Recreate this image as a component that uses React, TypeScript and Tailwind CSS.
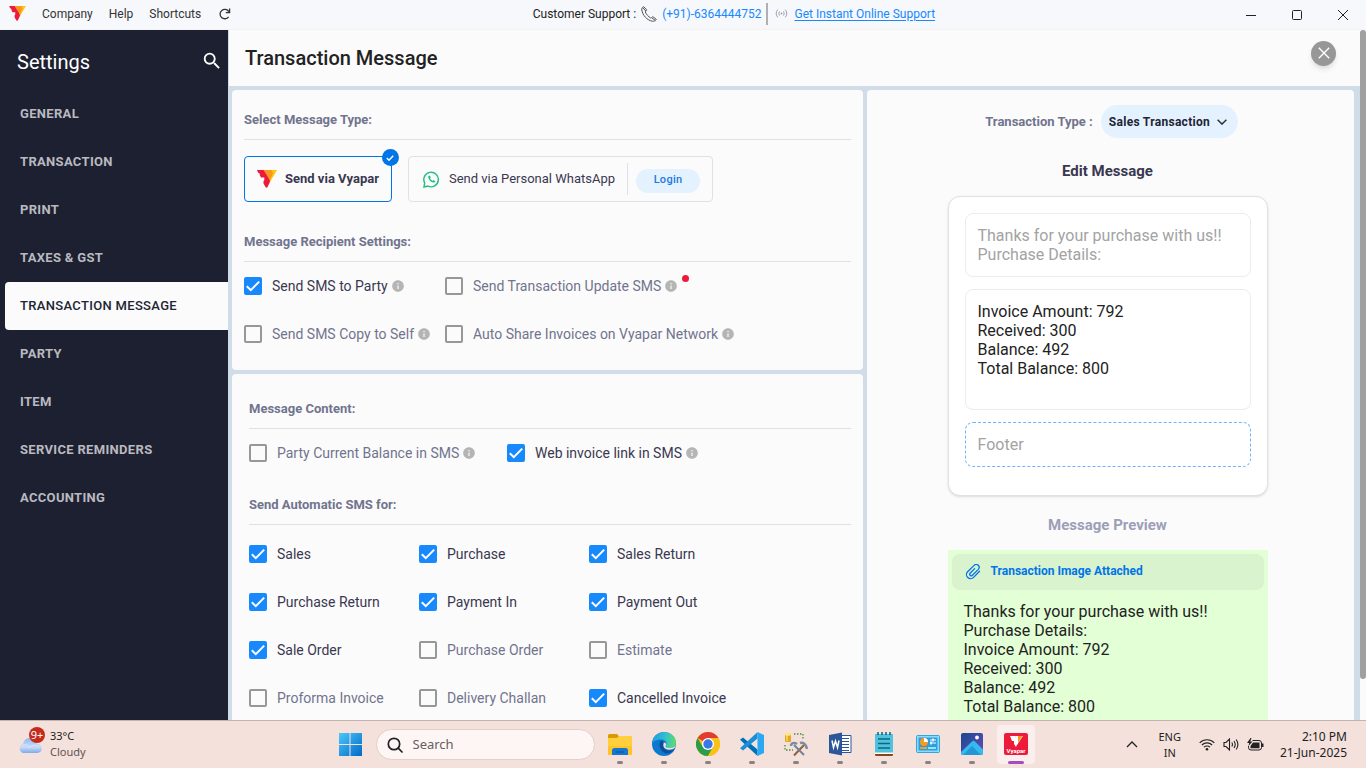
import type { ReactNode } from 'react';
import { MdInfo, MdSearch } from 'react-icons/md';

const NAV = [
  'GENERAL',
  'TRANSACTION',
  'PRINT',
  'TAXES & GST',
  'TRANSACTION MESSAGE',
  'PARTY',
  'ITEM',
  'SERVICE REMINDERS',
  'ACCOUNTING',
];

const AUTO_SMS: [string, boolean][] = [
  ['Sales', true],
  ['Purchase', true],
  ['Sales Return', true],
  ['Purchase Return', true],
  ['Payment In', true],
  ['Payment Out', true],
  ['Sale Order', true],
  ['Purchase Order', false],
  ['Estimate', false],
  ['Proforma Invoice', false],
  ['Delivery Challan', false],
  ['Cancelled Invoice', true],
];

const BODY_TEXT = 'Invoice Amount: 792\nReceived: 300\nBalance: 492\nTotal Balance: 800';
const HEADER_TEXT = 'Thanks for your purchase with us!!\nPurchase Details:';

function VyaparLogo({ className }: { className?: string }) {
  return (
    <svg viewBox="0 0 20 18" className={className} aria-hidden="true">
      <path d="M0 0h7.500l6 10-1 3-2.500 5-1.500-1-2-3.500V11l.8-.8V7.500H4L2.800 5.200V3.800L1 2.500z" fill="#ed1a3b" />
      <path d="M6.500 0H16l1 2-3.500 8.500H13z" fill="#f8991d" />
      <path d="M14.500 0H20l-7 12-.3-2L16 3.500z" fill="#ffc20e" />
    </svg>
  );
}

function Check({ label, checked, info, dot }: { label: string; checked?: boolean; info?: boolean; dot?: boolean }) {
  return (
    <div className="flex h-12 items-center">
      <label className="flex items-center gap-2.5 text-sm whitespace-nowrap text-[#71748e] has-checked:text-[#3a3850]">
        <span className="grid size-[18px] place-items-center">
          <input
            type="checkbox"
            defaultChecked={checked}
            className="peer col-start-1 row-start-1 size-[18px] appearance-none rounded-[2px] border-2 border-[#979797] checked:border-[#1789fc] checked:bg-[#1789fc]"
          />
          <svg viewBox="0 0 18 18" className="pointer-events-none col-start-1 row-start-1 hidden size-[18px] peer-checked:block" aria-hidden="true">
            <path d="M2.800 9.200l4 4 8.400-8.600" fill="none" stroke="#fff" strokeWidth="2" />
          </svg>
        </span>
        {label}
      </label>
      {info && <MdInfo className="ml-[3px] size-[14px] text-[#b5b5b5]" />}
      {dot && <span className="mb-[15px] ml-1 size-[7px] rounded-full bg-[#ed1a3b]" />}
    </div>
  );
}

function SectionTitle({ children }: { children: ReactNode }) {
  return (
    <h2 className="border-b border-[#dde2e8] pb-[11px] text-[13px] leading-4 font-bold text-[#71748e]">{children}</h2>
  );
}

function TitleBar() {
  return (
    <header className="flex h-[30px] shrink-0 items-center border-b border-[#f3f3f3] bg-[#f6f8fc] text-xs leading-4 text-[#333]">
      <div className="flex w-[39%] items-center gap-4 pb-[2px] pl-[9px]">
        <VyaparLogo className="h-[15px] w-[17px]" />
        <nav className="flex items-center gap-4">
          <button>Company</button>
          <button>Help</button>
          <button>Shortcuts</button>
          <button aria-label="Refresh" className="ml-[2px]">
            <svg viewBox="0 0 12 12" className="size-3" fill="none" stroke="#333" strokeWidth="1.300" aria-hidden="true">
              <path d="M9.600 8.800A4.700 4.700 0 1 1 9.800 3.600M10.600.500v4.100H6.800" />
            </svg>
          </button>
        </nav>
      </div>
      <div className="flex items-center pb-[2px]">
        <span className="text-[#222]">Customer Support :</span>
        <svg viewBox="0 0 16 16" className="mx-[5px] size-4" fill="none" stroke="#555" strokeWidth="1" aria-hidden="true">
          <path d="M2.800.700C1.200 1.200.500 2.500.800 4c1 5.500 5 10 10.500 11.200 1.500.3 3.200-.4 4-1.900l-3.400-2.600c-1 .2-1.300 1.300-2.300 1.200C7.500 10.800 5.300 8.400 4.300 6c0-1 1.200-1 1.300-2.200zM2 2l2.800 3M11 12l3.300 2.500" />
        </svg>
        <a href="tel:+916364444752" className="text-[#1789fc]">(+91)-6364444752</a>
        <span className="mx-1 h-[22px] w-[2px] bg-[#b0b0b4]" />
        <svg viewBox="0 0 14 10" className="mx-[3px] h-[9px] w-[13px]" fill="none" stroke="#8f93a3" aria-hidden="true">
          <path d="M2.800.800Q-.6 5 2.800 9.200M11.200.800q3.400 4.200 0 8.400M4.800 2.800q-1.700 2.200 0 4.400M9.200 2.800q1.700 2.200 0 4.400" />
          <circle cx="7" cy="5" r=".6" fill="#8f93a3" />
        </svg>
        <a href="#support" className="ml-1 text-[#1789fc] underline underline-offset-2">Get Instant Online Support</a>
      </div>
      <div className="ml-auto flex">
        <button aria-label="Minimize" className="grid h-[29px] w-[46px] place-items-center">
          <svg viewBox="0 0 10 10" className="size-[10px]" stroke="#222"><path d="M0 5.500h10" /></svg>
        </button>
        <button aria-label="Maximize" className="grid h-[29px] w-[46px] place-items-center">
          <svg viewBox="0 0 10 10" className="size-[10px]" fill="none" stroke="#222"><rect x=".5" y=".5" width="9" height="9" rx="1" /></svg>
        </button>
        <button aria-label="Close" className="grid h-[29px] w-[46px] place-items-center">
          <svg viewBox="0 0 10 10" className="size-[10px]" stroke="#222"><path d="M0 0l10 10M10 0L0 10" /></svg>
        </button>
      </div>
    </header>
  );
}

function Sidebar() {
  return (
    <aside className="w-[228px] shrink-0 bg-[#1d2030]">
      <div className="flex h-[60px] items-center justify-between pt-1 pr-[5px] pl-[17px]">
        <h2 className="text-xl text-white">Settings</h2>
        <button aria-label="Search settings" className="pb-[2px]">
          <MdSearch className="size-[22px] text-white" />
        </button>
      </div>
      <nav className="flex flex-col pl-[5px]">
        {NAV.map((item) => (
          <a
            key={item}
            href="#settings"
            className={
              item === 'TRANSACTION MESSAGE'
                ? 'flex h-12 items-center rounded-l bg-[#fbfbfb] pl-[15px] text-[13px] font-medium tracking-wide text-[#222433]'
                : 'flex h-12 items-center pl-[15px] text-[13px] font-bold tracking-wide text-[#b9bac0]'
            }
          >
            {item}
          </a>
        ))}
      </nav>
    </aside>
  );
}

function MessageType() {
  return (
    <div className="mt-4 flex gap-4">
      <label className="relative flex h-[46px] items-center gap-2 rounded border border-[#0075e8] px-3 text-[13px] font-bold text-[#3a3850]">
        <input type="radio" name="channel" defaultChecked className="sr-only" />
        <VyaparLogo className="h-[18px] w-5" />
        Send via Vyapar
        <span className="absolute -top-2 -right-2 grid size-[17px] place-items-center rounded-full bg-[#0075e8]">
          <svg viewBox="0 0 8 8" className="size-2" fill="none" stroke="#fff" strokeWidth="1.500"><path d="M.8 4l2.200 2.200L7.200 1.800" /></svg>
        </span>
      </label>
      <div className="flex h-[46px] items-center rounded border border-[#dde2e8] pr-3 pl-[14px]">
        <label className="flex items-center gap-[9px] text-[13px] text-[#3a3850]">
          <input type="radio" name="channel" className="sr-only" />
          <svg viewBox="0 0 18 18" className="size-[17px]" aria-hidden="true">
            <path d="M1 17l.8-4.300A7.700 7.700 0 1 1 5.300 16z" fill="none" stroke="#1fbf83" strokeWidth="1.500" />
            <path d="M6.400 4.900c-.8.500-1 1.500-.7 2.400.8 2.400 2.700 4.200 5.100 4.900 1 .2 2-.3 2.300-1.400l-2-1.200-.9.9C8.800 9.900 8 9 7.500 7.800l.7-.8-.8-2z" fill="#1fbf83" />
          </svg>
          Send via Personal WhatsApp
        </label>
        <span className="ml-3 h-8 w-px bg-[#dde2e8]" />
        <button className="mt-[3px] ml-2 h-6 w-16 rounded-full bg-[#e4f2ff] text-[11px] font-medium tracking-wide text-[#2378e0]">Login</button>
      </div>
    </div>
  );
}

function EditPanel() {
  return (
    <section className="overflow-hidden rounded bg-[#fbfbfb] pt-[15px]">
      <div className="flex items-center justify-center gap-2 pl-[2px]">
        <label htmlFor="txn-type" className="text-[13px] font-bold text-[#71748e]">Transaction Type :</label>
        <span className="grid items-center">
          <select
            id="txn-type"
            className="col-start-1 row-start-1 h-[33px] w-[137px] appearance-none rounded-full bg-[#e4f2ff] pl-2 text-xs font-bold tracking-wide text-[#222433]"
          >
            <option>Sales Transaction</option>
            <option>Purchase Transaction</option>
          </select>
          <svg viewBox="0 0 10 6" className="pointer-events-none col-start-1 row-start-1 mr-[11px] h-[6px] w-[10px] justify-self-end" fill="none" stroke="#333" strokeWidth="1.500">
            <path d="M.6.700L5 5.100 9.400.700" />
          </svg>
        </span>
      </div>
      <div className="flex flex-col items-center pr-[6px]">
        <h2 className="mt-[22px] text-[15px] leading-[22px] font-bold text-[#3a3850]">Edit Message</h2>
        <div className="mt-[14px] flex h-[300px] w-80 shrink-0 flex-col gap-3 rounded-xl border border-[#dde2e8] bg-white p-4 text-base leading-[19px] shadow">
          <textarea aria-label="Message header" defaultValue={HEADER_TEXT} className="block h-16 shrink-0 resize-none overflow-hidden rounded-lg border border-[#ececec] px-3 py-3 text-[#a3a3a3]" />
          <textarea aria-label="Message body" readOnly defaultValue={BODY_TEXT} className="block h-[121px] shrink-0 resize-none overflow-hidden rounded-lg border border-[#ececec] px-3 py-3 text-[#222]" />
          <textarea aria-label="Message footer" placeholder="Footer" className="block h-[45px] shrink-0 resize-none overflow-hidden rounded-lg border border-dashed border-[#6fb3fa] px-3 py-3 placeholder:text-[#a3a3a3]" />
        </div>
        <h2 className="mt-[18px] text-[15px] leading-[22px] font-bold text-[#9c9fb8]">Message Preview</h2>
        <div className="mt-[14px] w-80 bg-[#e3ffd6] p-1 pb-8">
          <div className="flex h-9 items-center gap-[10px] rounded-lg bg-[#d9f3ce] px-[13px]">
            <svg viewBox="0 0 16 16" className="size-4" fill="none" stroke="#0075e8" strokeWidth="1.300" strokeLinecap="round" aria-hidden="true">
              <path d="M14.500 7.300l-5.900 6.100a4.100 4.100 0 0 1-6-5.600l6.500-6.400a2.900 2.900 0 0 1 4.200 4L7.400 11.300a1.500 1.500 0 0 1-2.300-2l4.600-4.700" />
            </svg>
            <a href="#attachment" className="pb-[2px] text-xs font-bold text-[#0075e8]">Transaction Image Attached</a>
          </div>
          <p className="mt-3 px-3 text-base leading-[19px] whitespace-pre-line text-[#222]">{HEADER_TEXT + '\n' + BODY_TEXT}</p>
        </div>
      </div>
    </section>
  );
}

function TaskIcon({ name, active, children }: { name: string; active?: boolean; children: ReactNode }) {
  return (
    <button aria-label={name} className="flex w-11 justify-center">
      <span className={active ? 'flex h-[39px] w-[38px] flex-col items-center justify-between rounded bg-[#faefec] pt-[7px]' : 'flex h-[39px] w-[38px] flex-col items-center justify-between pt-[7px]'}>
        <svg viewBox="0 0 24 24" className="size-6" aria-hidden="true">{children}</svg>
        <span className={active ? 'h-[3px] w-4 rounded-full bg-[#a64bc0]' : 'h-[3px] w-[6px] rounded-full bg-[#8b8180]'} />
      </span>
    </button>
  );
}

function Taskbar() {
  return (
    <footer className="flex h-12 shrink-0 items-center border-t border-[#c4b3af] bg-[#f5e1dc] font-['Noto_Sans','Open_Sans',sans-serif] text-[#222]">
      <button className="flex flex-1 items-center gap-[3px] pb-[2px] pl-[18px] text-left">
        <span className="relative mb-1 block h-7 w-[29px]">
          <svg viewBox="0 0 26 18" className="mt-[9px] h-[17px] w-[25px]" aria-hidden="true">
            <defs>
              <linearGradient id="cloud" x2="0" y2="1"><stop stopColor="#8fb7f3" /><stop offset=".6" stopColor="#c9dcf8" /><stop offset="1" stopColor="#7da9ec" /></linearGradient>
            </defs>
            <path d="M5 17a5 5 0 0 1 0-9.500C6 3 9 1 12.500 1c4 0 7 3 7.500 6.500 3 0 5 2 5 4.800S23 17 20 17z" fill="url(#cloud)" />
            <path d="M4 9c4-2 7 0 8 2 3-3 7-3 10-1" fill="none" stroke="#dce9fb" />
          </svg>
          <span className="absolute -top-px right-[2px] grid size-4 place-items-center rounded-full bg-[#c42b1c] text-[11px] leading-none text-white">9+</span>
        </span>
        <span className="text-[11px] leading-4">
          <span className="block">33°C</span>
          <span className="block text-[#5c5452]">Cloudy</span>
        </span>
      </button>
      <div className="flex items-center">
        <button aria-label="Start" className="grid w-11 place-items-center">
          <svg viewBox="0 0 24 24" className="size-6" aria-hidden="true">
            <defs><linearGradient id="win" x2="1" y2="1"><stop stopColor="#4cc8fa" /><stop offset="1" stopColor="#0068c8" /></linearGradient></defs>
            <path d="M1 0h10.500v11H1zM12.500 0H24v11H12.500zM1 12h10.500v11H1zM12.500 12H24v11H12.500z" fill="url(#win)" />
          </svg>
        </button>
        <label className="mr-[3px] ml-1 flex h-[31px] w-[219px] items-center gap-[10px] rounded-full border border-[#e2cfca] bg-[#fdf6f4] px-[10px]">
          <svg viewBox="0 0 16 16" className="size-4 shrink-0" fill="none" stroke="#222" strokeWidth="1.700" strokeLinecap="round" aria-hidden="true">
            <circle cx="7" cy="7" r="5.700" /><path d="M11.200 11.200L15 15" />
          </svg>
          <input type="text" aria-label="Search" placeholder="Search" className="min-w-0 flex-1 bg-transparent text-[13px] placeholder:text-[#66605e]" />
        </label>
        <TaskIcon name="File Explorer">
          <path d="M0 3.500A1.500 1.500 0 0 1 1.500 2H9l2 2.500V8H0z" fill="#d99a00" />
          <path d="M0 6h9l2-2h12a1 1 0 0 1 1 1v18H0z" fill="#ffcf3d" />
          <path d="M0 14h24v9H0z" fill="#fdbd1b" opacity=".6" />
          <path d="M4 23v-4.500A2.500 2.500 0 0 1 6.500 16h11a2.500 2.500 0 0 1 2.500 2.500V23z" fill="#1377cf" />
          <path d="M8 20h8" stroke="#0a549c" />
        </TaskIcon>
        <TaskIcon name="Microsoft Edge">
          <defs><linearGradient id="edge" y1=".4" x2="1" y2=".5"><stop stopColor="#1b9de2" /><stop offset=".6" stopColor="#36c3c8" /><stop offset="1" stopColor="#62dd62" /></linearGradient></defs>
          <circle cx="12" cy="12" r="12" fill="#0f77cf" />
          <path d="M0 11.500C.5 5 5.500 0 12 0c7 0 12 5 12 10 0 4-3 6-6 6-2.500 0-4.500-.8-4.500-1.800 0-.6 1-.9 1-2.700 0-2.500-2.700-4-5.500-4-4.500 0-8 2-9 4z" fill="url(#edge)" />
          <path d="M9 8.500c-3 3-2 10 5 13 3 0 6.500-1.500 8-4-7 3-12.500-1-10.500-6 .3-1.500-1-3-2.500-3z" fill="#0c4f97" />
          <path d="M12 10.500c-2 4 1 8 7 7 2-.3 3.500-1.200 4-2L24 12c-1 3-3.500 4-6 4-3 0-5-.8-4.500-2 1.200-1.500 1-3-1.500-3.500z" fill="#f5e1dc" />
        </TaskIcon>
        <TaskIcon name="Google Chrome">
          <circle cx="12" cy="12" r="12" fill="#fbc116" />
          <path d="M12 12L1.600 6A12 12 0 0 1 22.400 6z" fill="#e33b2e" />
          <path d="M1.600 6A12 12 0 0 0 12 24l5.200-9L12 12 6.800 15z" fill="#2a9d4a" />
          <path d="M12 6h10.400A12 12 0 0 1 12 24l5.200-9z" fill="#fbc116" />
          <circle cx="12" cy="12" r="6" fill="#fff" /><circle cx="12" cy="12" r="4.700" fill="#3b78e7" />
        </TaskIcon>
        <TaskIcon name="Visual Studio Code">
          <path d="M17.500 24v-6.500L3 5.500 0 7.800z" fill="#0070b8" />
          <path d="M17.500 0v6.500L3 18.500 0 16.200z" fill="#1a8fd8" />
          <path d="M17.500 0L24 3v18l-6.500 3z" fill="#29a9f2" />
        </TaskIcon>
        <TaskIcon name="Build tools">
          <path d="M10 2h9v6M1 13v5h8" fill="none" stroke="#4c8c3c" strokeWidth="1.300" strokeDasharray="1.500 1.500" />
          <path d="M1 2.200v7c0 1.200 6 1.200 6 0v-7z" fill="#e2a91a" /><ellipse cx="4" cy="2.200" rx="3" ry="1.500" fill="#ffe27d" />
          <path d="M3 2v7" stroke="#fff0ad" />
          <path d="M20 13L10 23.500" stroke="#8d5f3c" strokeWidth="2" />
          <path d="M10 13l10 10" stroke="#6f8296" strokeWidth="2" />
          <path d="M16 11c3-1 6 1 7 6M7 14c0-3 3-4 6-2" fill="none" stroke="#7b8d9f" strokeWidth="2.500" />
        </TaskIcon>
        <TaskIcon name="Microsoft Word">
          <path d="M11 3.500h12v17H11z" fill="#fff" stroke="#2b579a" />
          <path d="M14 6.500h7M14 9.500h7M14 12.500h7M14 15.500h7M14 18.500h7" stroke="#2b579a" />
          <path d="M1 3l13-2.500v23L1 21z" fill="#2b579a" />
          <path d="M4 8.500l1.500 7L7.500 9l2 6.500 1.500-7" fill="none" stroke="#fff" strokeWidth="1.500" />
        </TaskIcon>
        <TaskIcon name="Notepad">
          <path d="M3 20h18v2.500a1.500 1.500 0 0 1-1.500 1.500h-15A1.500 1.500 0 0 1 3 22.500z" fill="#8b4513" />
          <path d="M3 2h18v19H3z" fill="#4fc3dc" /><path d="M3 20.500h18V22H3z" fill="#fff" />
          <path d="M6 0v3M10 0v3M14 0v3M18 0v3" stroke="#155c79" strokeWidth="1.500" />
          <path d="M6 7h12M6 11.500h12M6 16h12" stroke="#126583" strokeWidth="1.300" />
        </TaskIcon>
        <TaskIcon name="Control Panel">
          <rect x=".5" y="3.500" width="23" height="17" rx="1" fill="#8bdcf9" stroke="#36a4dc" />
          <path d="M2.500 5.500h19v13h-19z" fill="#2a9ee0" />
          <circle cx="8" cy="10" r="4" fill="#f59a22" /><path d="M8 10V6a4 4 0 0 1 4 4z" fill="#fff" />
          <path d="M14 8h6M14 11h6" stroke="#fff" strokeWidth="1" /><path d="M17 6.500v3M15 9.500v3" stroke="#fff" strokeWidth="1.500" />
          <path d="M4 16h7" stroke="#f59a22" strokeWidth="2" /><path d="M12 16h8" stroke="#9be2fb" strokeWidth="2" />
        </TaskIcon>
        <TaskIcon name="Photos">
          <defs><linearGradient id="photo" x2="1" y2="1"><stop stopColor="#164a91" /><stop offset="1" stopColor="#6b4bb8" /></linearGradient></defs>
          <rect x="1" y="1" width="22" height="22" rx="2" fill="url(#photo)" />
          <path d="M1 20L12 9.500c1-1 2-1 3 0l8 8V21a2 2 0 0 1-2 2H3a2 2 0 0 1-2-2z" fill="#36b9ee" />
          <path d="M12 14l9 9H3z" fill="#1580c9" opacity=".6" /><circle cx="17" cy="5.500" r="1.900" fill="#fff" />
        </TaskIcon>
        <TaskIcon name="Vyapar" active>
          <rect x="0" y="1" width="24" height="22" rx="2" fill="#ed1a3b" />
          <path d="M6 4h5l3 6-2 5-2-3V9H8z" fill="#fff" /><path d="M11 4h8l-6 9z" fill="#fff" /><path d="M14 4h4.500L14 11z" fill="#f8991d" />
          <text x="12" y="20.500" textAnchor="middle" fontSize="6" fontWeight="700" fill="#fff" fontFamily="Roboto, sans-serif">Vyapar</text>
        </TaskIcon>
      </div>
      <div className="flex flex-1 items-center justify-end pr-[19px] text-xs leading-4">
        <button aria-label="Hidden icons" className="mr-5">
          <svg viewBox="0 0 12 7" className="h-[7px] w-3" fill="none" stroke="#222" strokeWidth="1.300"><path d="M1 6l5-5 5 5" /></svg>
        </button>
        <button className="mr-[18px] text-center text-[11px] leading-4">ENG<br />IN</button>
        <button aria-label="Network, volume and battery" className="mr-4 flex items-center gap-2">
          <svg viewBox="0 0 16 13" className="h-[13px] w-4" fill="none" stroke="#222" strokeWidth="1.100">
            <path d="M.7 4.800a10.300 10.300 0 0 1 14.600 0M2.900 7a7.200 7.200 0 0 1 10.200 0M5 9.200a4.200 4.200 0 0 1 6 0" /><circle cx="8" cy="11.200" r="1.300" fill="#222" stroke="none" />
          </svg>
          <svg viewBox="0 0 16 13" className="h-[13px] w-4" fill="none" stroke="#222" strokeWidth="1.100">
            <path d="M1 4.500h2L6.500 1v11L3 8.500H1zM8.800 4.500q1.300 2 0 4M11 3q2.400 3.500 0 7M13.200 1.500q3.400 5 0 10" />
          </svg>
          <svg viewBox="0 0 17 13" className="h-[13px] w-[17px]" fill="#222">
            <path d="M5.500 2.500H12A2.500 2.500 0 0 1 14.500 5v4.500A2.500 2.500 0 0 1 12 12H4A2.500 2.500 0 0 1 1.500 9.500V8" fill="none" stroke="#222" /><path d="M6 4.500h6.500v5.700H3.500V8zM15 5.500h1.500V9H15zM3.500 0L0 5h2.200L1.500 8 5.500 3.500H3.200L4.500 0z" />
          </svg>
        </button>
        <button className="text-right">2:10 PM<br />21-Jun-2025</button>
      </div>
    </footer>
  );
}

export default function App() {
  return (
    <div className="flex h-screen flex-col overflow-hidden font-['Roboto',sans-serif]">
      <TitleBar />
      <div className="flex min-h-0 flex-1 overflow-hidden">
        <Sidebar />
        <main className="flex min-w-0 flex-1 flex-col bg-[#d0dde8]">
          <div className="ml-px flex h-14 shrink-0 items-center justify-between bg-[#fbfbfb] pr-6 pl-4">
            <h1 className="text-xl font-medium text-[#222]">Transaction Message</h1>
            <button aria-label="Close settings" className="mb-[10px] grid size-[25px] place-items-center rounded-full bg-[#979797] shadow-md">
              <svg viewBox="0 0 12 12" className="size-3" stroke="#fff" strokeWidth="1.400"><path d="M.8.800l10.400 10.400M11.200.800L.8 11.200" /></svg>
            </button>
          </div>
          <div className="grid min-h-0 flex-1 grid-cols-[631fr_487fr] gap-1 overflow-hidden pt-1 pr-[6px] pl-1">
            <div className="flex flex-col gap-1">
              <section className="rounded bg-[#fbfbfb] px-3 pt-[22px] pb-3">
                <SectionTitle>Select Message Type:</SectionTitle>
                <MessageType />
                <div className="mt-8">
                  <SectionTitle>Message Recipient Settings:</SectionTitle>
                </div>
                <div className="grid grid-cols-[201px_1fr]">
                  <Check label="Send SMS to Party" checked info />
                  <Check label="Send Transaction Update SMS" info dot />
                  <Check label="Send SMS Copy to Self" info />
                  <Check label="Auto Share Invoices on Vyapar Network" info />
                </div>
              </section>
              <section className="flex-1 rounded-t bg-[#fbfbfb] pt-[27px] pr-3 pl-[17px]">
                <SectionTitle>Message Content:</SectionTitle>
                <div className="grid grid-cols-[258px_1fr]">
                  <Check label="Party Current Balance in SMS" info />
                  <Check label="Web invoice link in SMS" checked info />
                </div>
                <div className="mt-5">
                  <SectionTitle>Send Automatic SMS for:</SectionTitle>
                </div>
                <div className="mt-[5px] grid grid-cols-[170px_170px_1fr]">
                  {AUTO_SMS.map(([label, on]) => (
                    <Check key={label} label={label} checked={on} />
                  ))}
                </div>
              </section>
            </div>
            <EditPanel />
          </div>
        </main>
        <div className="w-[6px] shrink-0 bg-[#fbfbfb]" aria-hidden="true">
          <div className="h-[94%] rounded-full bg-[#a0a0a0]" />
        </div>
      </div>
      <Taskbar />
    </div>
  );
}
